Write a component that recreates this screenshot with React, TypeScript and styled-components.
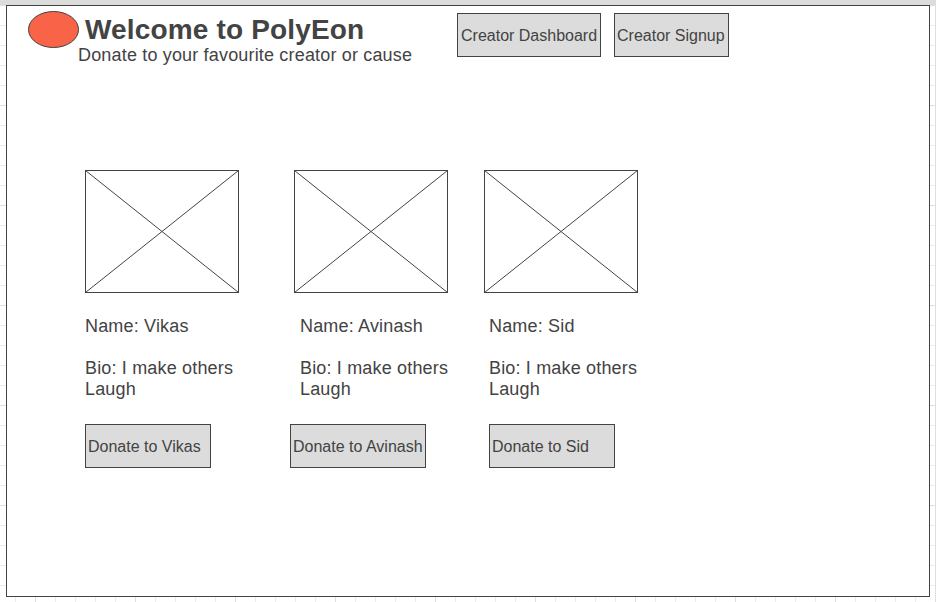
import React from "react";
import styled, { createGlobalStyle } from "styled-components";

const INK = "#434343";

const GlobalStyle = createGlobalStyle`
  * { box-sizing: border-box; }
  body {
    margin: 0;
    overflow: hidden;
    font-family: "Liberation Sans", Arial, sans-serif;
    color: ${INK};
  }
  h1, p { margin: 0; }
`;

const Canvas = styled.div`
  width: 936px;
  height: 602px;
  padding: 5px 6px;
  background:
    linear-gradient(#dcdcdc, #dcdcdc) 0 0 / 100% 5px no-repeat,
    linear-gradient(90deg, #dedede 1px, transparent 1px) 35px 5px / 100px 100px,
    linear-gradient(#dedede 1px, transparent 1px) 35px 5px / 100px 100px,
    linear-gradient(90deg, #ececec 1px, transparent 1px) 15px 5px / 20px 20px,
    linear-gradient(#ececec 1px, transparent 1px) 15px 5px / 20px 20px,
    #fff;
`;

const Frame = styled.main`
  width: 924px;
  height: 592px;
  border: 1px solid ${INK};
  background: #fff;
`;

const Header = styled.header`
  display: flex;
  height: 164px;
  padding-left: 21px;
`;

const Logo = styled.svg`
  flex: none;
  width: 51px;
  height: 37px;
  margin-top: 5px;
`;

const Heading = styled.div`
  width: 378px;
  padding-top: 8px;
  white-space: nowrap;
`;

const Title = styled.h1`
  padding-left: 6px;
  font-size: 28px;
  line-height: 32px;
  letter-spacing: 0.16px;
`;

const Text = styled.p`
  font-size: 18px;
  line-height: 21px;
  letter-spacing: 0.17px;
`;

const Subtitle = styled(Text)`
  margin: -1px 0 0 -1px;
`;

const Nav = styled.nav`
  display: flex;
  gap: 13px;
  padding-top: 7px;
`;

const Button = styled.button<{ $width: number; $inset?: number }>`
  width: ${({ $width }) => $width}px;
  height: 44px;
  padding: 1px 0 0 ${({ $inset = 2 }) => $inset}px;
  border: 1px solid ${INK};
  border-radius: 0;
  background: #dcdcdc;
  color: ${INK};
  font: 16px/18px "Liberation Sans", Arial, sans-serif;
  text-align: left;
  white-space: nowrap;
`;

const Creators = styled.section`
  display: flex;
  padding-left: 78px;
`;

const Card = styled.article<{ $width: number }>`
  flex: none;
  width: ${({ $width }) => $width}px;
`;

const Placeholder = styled.svg`
  display: block;
  width: 154px;
  height: 123px;
`;

const Details = styled.div<{ $indent: number }>`
  display: flex;
  flex-direction: column;
  gap: 21px;
  width: 160px;
  height: 131px;
  margin-left: ${({ $indent }) => $indent}px;
  padding-top: 23px;
`;

const Action = styled.div<{ $shift: number }>`
  margin-left: ${({ $shift }) => $shift}px;
`;

const creators = [
  { name: "Vikas", column: 209, indent: 0, shift: 0, button: 126 },
  { name: "Avinash", column: 190, indent: 6, shift: -4, button: 136 },
  { name: "Sid", column: 170, indent: 5, shift: 5, button: 126 },
];

export default function App() {
  return (
    <>
      <GlobalStyle />
      <Canvas>
        <Frame>
          <Header>
            <Logo viewBox="0 0 51 37" aria-hidden="true">
              <ellipse cx="25.5" cy="18.5" rx="25" ry="18" fill="#f96449" stroke={INK} />
            </Logo>
            <Heading>
              <Title>Welcome to PolyEon</Title>
              <Subtitle>Donate to your favourite creator or cause</Subtitle>
            </Heading>
            <Nav>
              <Button $width={144} $inset={3}>Creator Dashboard</Button>
              <Button $width={115}>Creator Signup</Button>
            </Nav>
          </Header>
          <Creators>
            {creators.map(({ name, column, indent, shift, button }) => (
              <Card key={name} $width={column}>
                <Placeholder viewBox="0 0 154 123" fill="none" stroke={INK} aria-hidden="true">
                  <rect x="0.5" y="0.5" width="153" height="122" />
                  <path d="M0.5 0.5 153.5 122.5M153.5 0.5 0.5 122.5" />
                </Placeholder>
                <Details $indent={indent}>
                  <Text>Name: {name}</Text>
                  <Text>Bio: I make others<br />Laugh</Text>
                </Details>
                <Action $shift={shift}>
                  <Button $width={button}>Donate to {name}</Button>
                </Action>
              </Card>
            ))}
          </Creators>
        </Frame>
      </Canvas>
    </>
  );
}
